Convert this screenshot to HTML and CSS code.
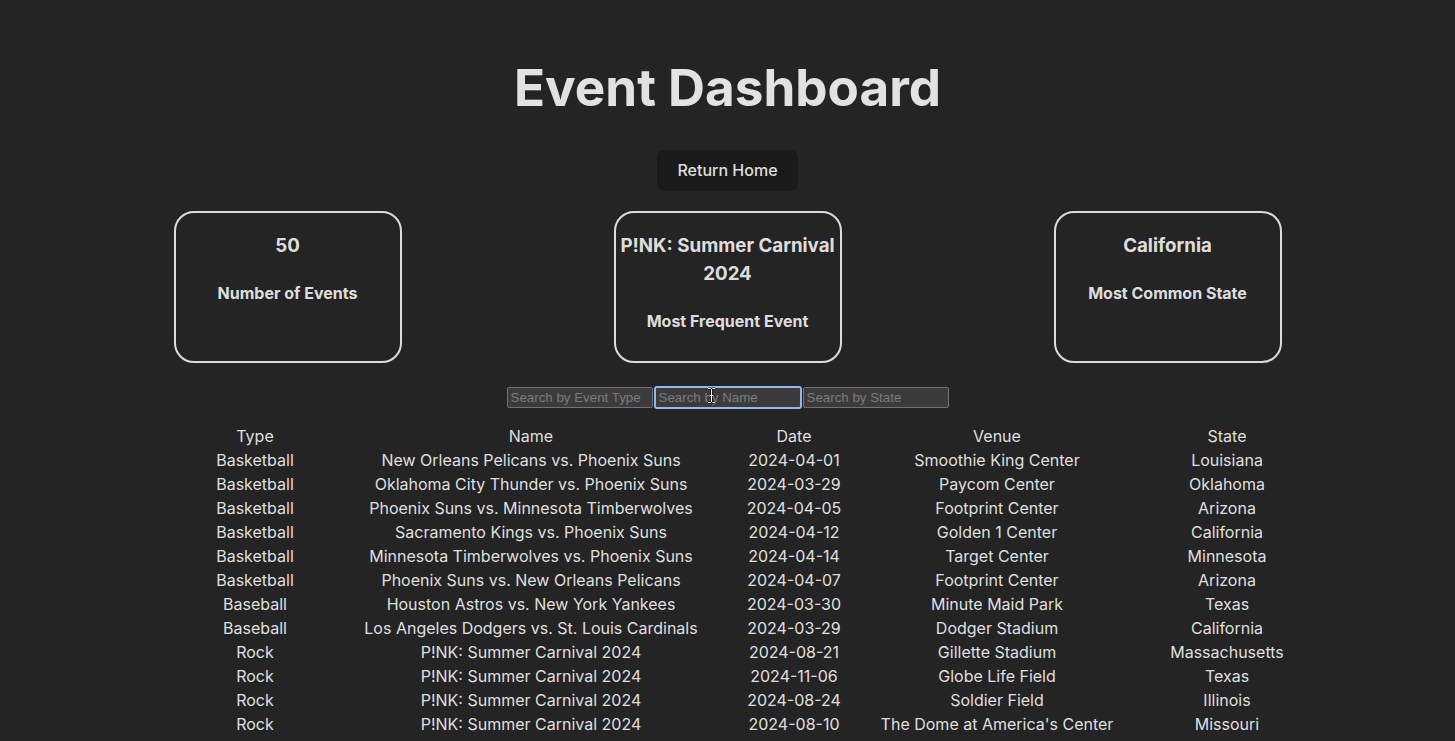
FILE: index.html
```html
<!DOCTYPE html>
<html lang="en">
<head>
<meta charset="utf-8">
<title>Event Dashboard</title>
<link rel="stylesheet" href="styles.css">
</head>
<body>
<div class="app">
  <h1 class="title">Event Dashboard</h1>
  <button class="home-btn">Return Home</button>
  <div class="stats">
    <div class="stat-card">
      <h3 class="stat-value">50</h3>
      <h4 class="stat-label">Number of Events</h4>
    </div>
    <div class="stat-card">
      <h3 class="stat-value">P!NK: Summer Carnival 2024</h3>
      <h4 class="stat-label">Most Frequent Event</h4>
    </div>
    <div class="stat-card">
      <h3 class="stat-value">California</h3>
      <h4 class="stat-label">Most Common State</h4>
    </div>
  </div>
  <div class="filters">
    <input class="filter" type="text" placeholder="Search by Event Type">
    <div class="filter-wrap">
      <input class="filter is-focused" type="text" placeholder="Search by Name">
      <svg class="ibeam" width="9" height="17" viewBox="0 0 9 17"><path d="M1 1.5h2.5L4.5 2.5L5.5 1.5H8M4.5 2.5V14.5M1 15.5h2.5L4.5 14.5L5.5 15.5H8M3 8.5h3" fill="none" stroke="#000" stroke-width="2.2"/><path d="M1 1.5h2.5L4.5 2.5L5.5 1.5H8M4.5 2.5V14.5M1 15.5h2.5L4.5 14.5L5.5 15.5H8M3 8.5h3" fill="none" stroke="#fff" stroke-width="1"/></svg>
    </div>
    <input class="filter" type="text" placeholder="Search by State">
  </div>
  <div class="table-wrap">
    <table class="events">
      <thead>
        <tr><th>Type</th><th>Name</th><th>Date</th><th>Venue</th><th>State</th></tr>
      </thead>
      <tbody>
        <tr><td>Basketball</td><td>New Orleans Pelicans vs. Phoenix Suns</td><td>2024-04-01</td><td>Smoothie King Center</td><td>Louisiana</td></tr>
        <tr><td>Basketball</td><td>Oklahoma City Thunder vs. Phoenix Suns</td><td>2024-03-29</td><td>Paycom Center</td><td>Oklahoma</td></tr>
        <tr><td>Basketball</td><td>Phoenix Suns vs. Minnesota Timberwolves</td><td>2024-04-05</td><td>Footprint Center</td><td>Arizona</td></tr>
        <tr><td>Basketball</td><td>Sacramento Kings vs. Phoenix Suns</td><td>2024-04-12</td><td>Golden 1 Center</td><td>California</td></tr>
        <tr><td>Basketball</td><td>Minnesota Timberwolves vs. Phoenix Suns</td><td>2024-04-14</td><td>Target Center</td><td>Minnesota</td></tr>
        <tr><td>Basketball</td><td>Phoenix Suns vs. New Orleans Pelicans</td><td>2024-04-07</td><td>Footprint Center</td><td>Arizona</td></tr>
        <tr><td>Baseball</td><td>Houston Astros vs. New York Yankees</td><td>2024-03-30</td><td>Minute Maid Park</td><td>Texas</td></tr>
        <tr><td>Baseball</td><td>Los Angeles Dodgers vs. St. Louis Cardinals</td><td>2024-03-29</td><td>Dodger Stadium</td><td>California</td></tr>
        <tr><td>Rock</td><td>P!NK: Summer Carnival 2024</td><td>2024-08-21</td><td>Gillette Stadium</td><td>Massachusetts</td></tr>
        <tr><td>Rock</td><td>P!NK: Summer Carnival 2024</td><td>2024-11-06</td><td>Globe Life Field</td><td>Texas</td></tr>
        <tr><td>Rock</td><td>P!NK: Summer Carnival 2024</td><td>2024-08-24</td><td>Soldier Field</td><td>Illinois</td></tr>
        <tr><td>Rock</td><td>P!NK: Summer Carnival 2024</td><td>2024-08-10</td><td>The Dome at America's Center</td><td>Missouri</td></tr>
      </tbody>
    </table>
  </div>
</div>
</body>
</html>
```
FILE: styles.css
```css
html, body {
  margin: 0;
  padding: 0;
  background: #242424;
}
body {
  font-family: Inter, "Noto Sans", sans-serif;
  color: rgba(255, 255, 255, 0.87);
  font-size: 16px;
  line-height: 1.5;
  overflow: hidden;
  height: 741px;
}
.app {
  display: flex;
  flex-direction: column;
  align-items: center;
  padding-top: 25px;
  text-align: center;
}
.title {
  font-size: 51.2px;
  line-height: 1.1;
  font-weight: 700;
  margin: 34.3px 0;
}
.home-btn {
  font-family: inherit;
  font-size: 16px;
  font-weight: 500;
  line-height: normal;
  color: rgba(255, 255, 255, 0.87);
  background: #1a1a1a;
  border: 1px solid transparent;
  border-radius: 8px;
  padding: 9px 19.2px 10.2px;
  cursor: pointer;
}
.stats {
  display: flex;
  justify-content: center;
  gap: 212px;
  margin-top: 20.4px;
  align-self: stretch;
}
.stat-card {
  box-sizing: border-box;
  width: 228px;
  height: 152px;
  border: 2px solid #dcdcdc;
  border-radius: 20px;
  padding: 0;
}
.stat-value {
  font-size: 18.72px;
  line-height: 28px;
  font-weight: 700;
  margin: 18.72px 0;
}
.stat-label {
  font-size: 16px;
  line-height: 24px;
  font-weight: 700;
  margin: 20.5px 0;
}
.filters {
  display: flex;
  gap: 2px;
  margin-top: 24px;
}
.filter-wrap {
  position: relative;
  display: flex;
}
.filter {
  box-sizing: border-box;
  width: 146px;
  height: 21px;
  background: #3b3b3b;
  border: 1px solid #727272;
  border-radius: 2px;
  padding: 1px 3px;
  font-family: "Liberation Sans", Arial, sans-serif;
  font-size: 13.33px;
  color: #e8e8e8;
  outline: none;
}
.filter::placeholder {
  color: #7b7b7b;
}
.filter.is-focused {
  border-color: #1a1a1a;
  outline: 2px solid #8fbaf0;
  outline-offset: -1px;
}
.ibeam {
  position: absolute;
  left: 52px;
  top: 0px;
}
.table-wrap {
  display: flex;
  justify-content: center;
  align-self: stretch;
  margin-top: 16px;
}
.events {
  border-collapse: collapse;
  table-layout: fixed;
  margin-left: 41px;
  width: 1146px;
}
.events th,
.events td {
  font-weight: 400;
  font-size: 16px;
  line-height: 24px;
  height: 24px;
  padding: 0;
  text-align: center;
  white-space: nowrap;
}
.events th:nth-child(1) { width: 160px; }
.events th:nth-child(2) { width: 392px; }
.events th:nth-child(3) { width: 134px; }
.events th:nth-child(4) { width: 272px; }
.events th:nth-child(5) { width: 188px; }
```
